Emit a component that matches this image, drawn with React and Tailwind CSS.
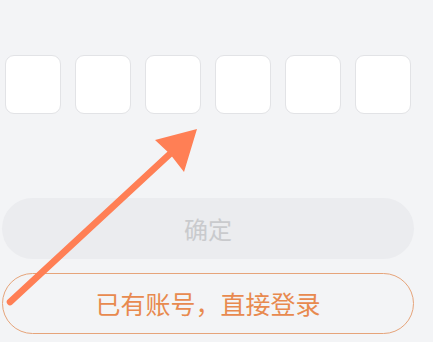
export default function App() {
  const font = { fontFamily: '"Noto Sans CJK SC", "Noto Sans", sans-serif' };
  return (
    <div className="relative w-[433px] h-[342px] overflow-hidden bg-[#f3f4f6]" style={font}>
      <div className="flex gap-[14px] pl-[5px] pt-[55px]">
        {Array.from({ length: 6 }).map((_, i) => (
          <div key={i} className="w-[56px] h-[59px] rounded-[9px] bg-white border border-[#e2e3e6]"></div>
        ))}
      </div>
      <div className="ml-[2px] mt-[84px] w-[412px] h-[61px] rounded-full bg-[#ebecef] flex items-center justify-center text-[24px] text-[#c9cacd]">
        确定
      </div>
      <div className="ml-[2px] mt-[14px] w-[412px] h-[61px] rounded-full border-[1.5px] border-[#e6a47a] flex items-center justify-center text-[25px] text-[#e88a4f]">
        已有账号，直接登录
      </div>
      <svg className="absolute left-0 top-0" width="433" height="342" viewBox="0 0 433 342">
        <line x1="10" y1="302" x2="172" y2="152" stroke="#ff7f55" strokeWidth="6.5" strokeLinecap="round" />
        <path d="M197 129 L155 140 L170 154 L184 172 Z" fill="#ff7f55" />
      </svg>
    </div>
  );
}
